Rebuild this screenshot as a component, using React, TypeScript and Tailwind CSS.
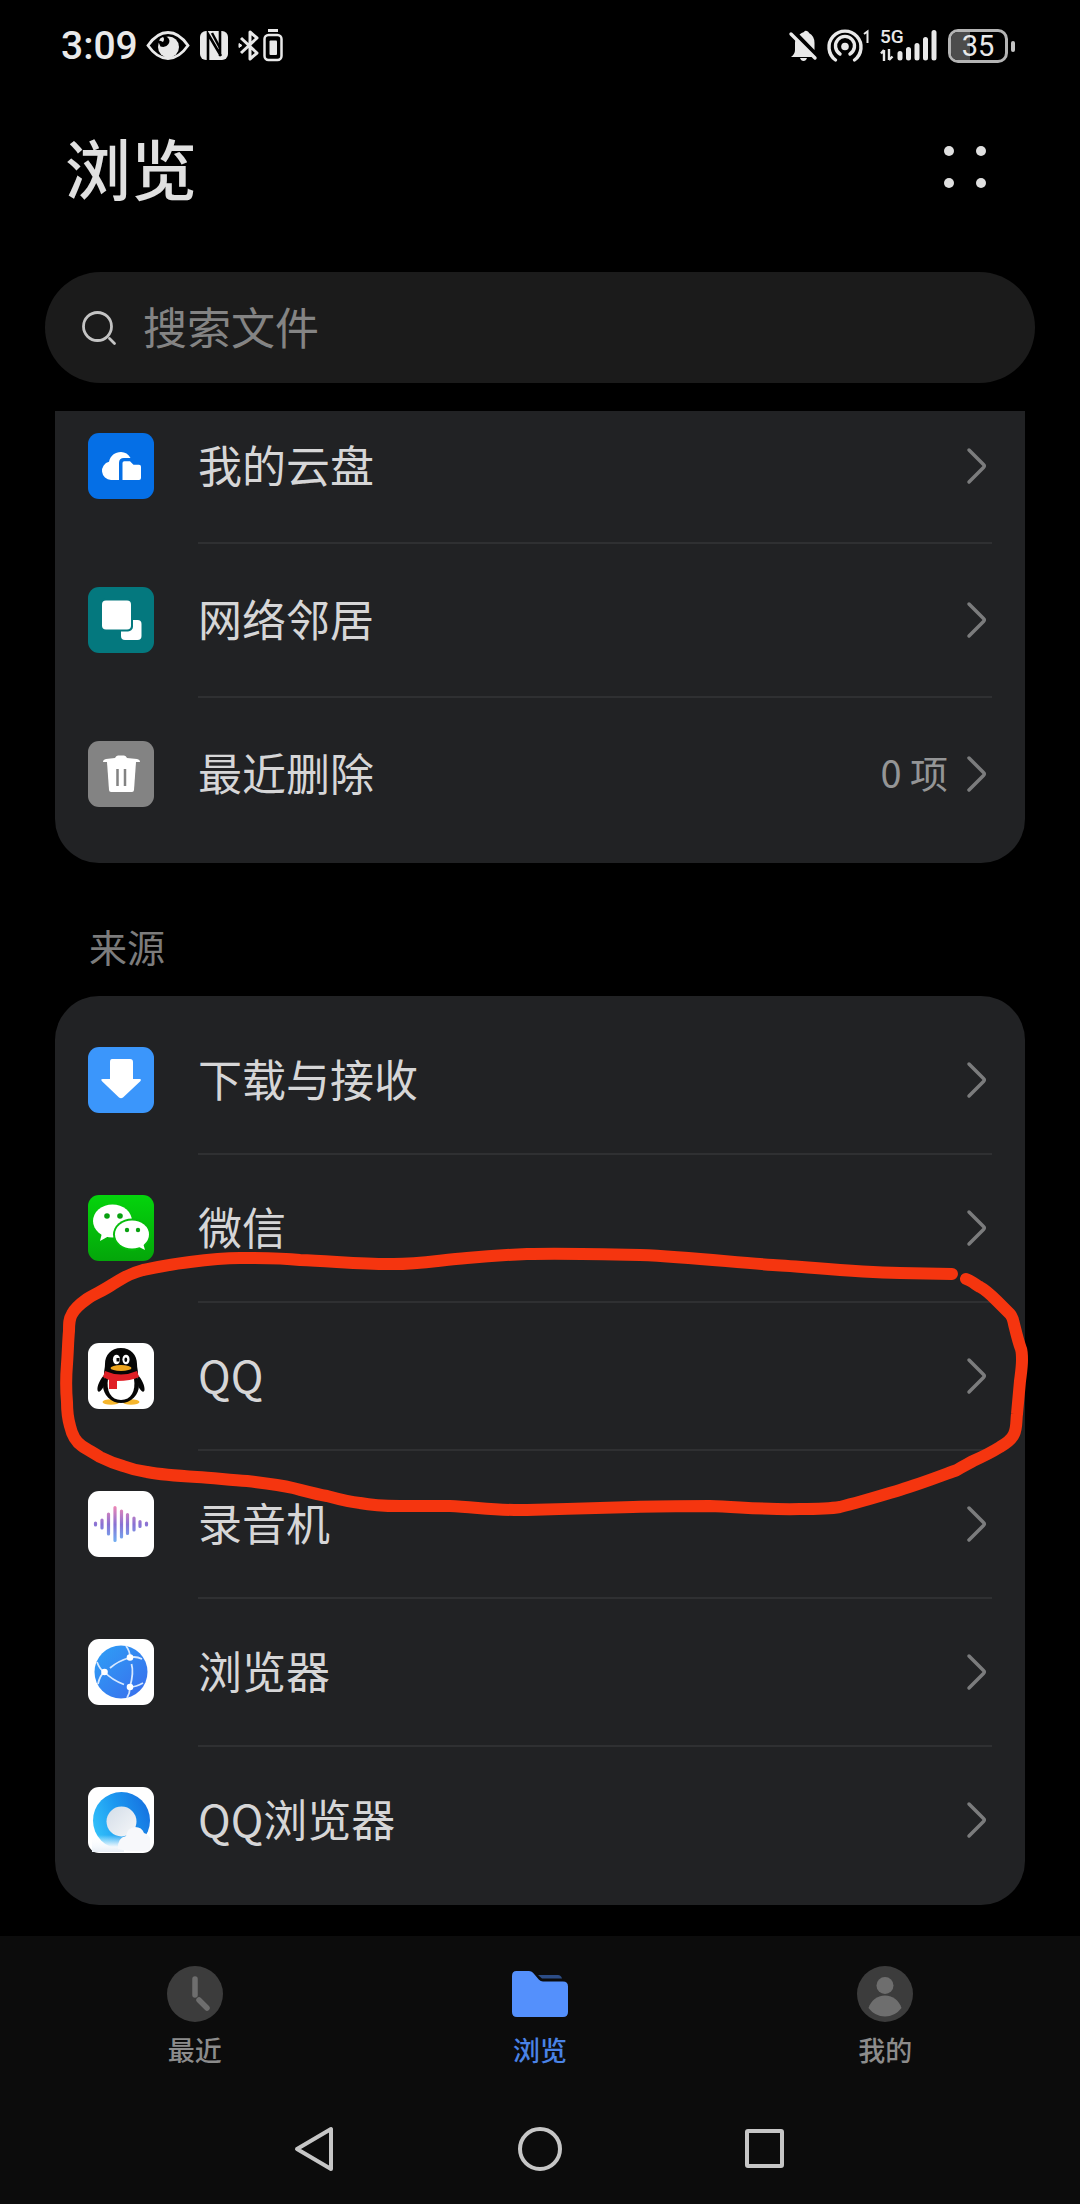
import type { ReactNode } from "react";

type RowData = { label: string; icon: ReactNode; detail?: string };

function Tile({ bg, children }: { bg: string; children: ReactNode }) {
  return (
    <svg viewBox="0 0 66 66" className="mb-0.5 h-[66px] w-[66px] shrink-0" aria-hidden="true">
      <rect width="66" height="66" rx="11" fill={bg} />
      {children}
    </svg>
  );
}

const CloudIcon = (
  <Tile bg="#056fe6">
    <path d="M23 47a9.300 9.300 0 0 1-2-18.300C22.500 22.500 27 19 33 19c4 0 7.500 2 9.500 6H36q-5 0-5 5v17Z" fill="#fff" />
    <path d="M34.500 30q0-1.800 1.800-1.800h5.700l3.500 3.500h5.500q2 0 2 2V45q0 2-2 2H34.500Z" fill="#fff" />
  </Tile>
);

const NetworkIcon = (
  <Tile bg="#04787e">
    <rect x="33" y="33" width="20.500" height="20" rx="4" fill="#fff" />
    <rect x="12" y="11.500" width="33" height="33" rx="5" fill="#04787e" />
    <rect x="14" y="13.500" width="29" height="29" rx="4" fill="#fff" />
  </Tile>
);

const TrashIcon = (
  <Tile bg="#838383">
    <path d="M27 17q1-2.500 3-2.500h6q2 0 3 2.500l10 1q3 .5 3 3H15q0-2.500 3-3Z" fill="#fff" />
    <path d="M19 21h29l-2 28q-.2 2-2 2H23q-1.800 0-2-2Z" fill="#fff" />
    <path d="M29.500 28v17M37 28v17" stroke="#838383" strokeWidth="2.500" />
  </Tile>
);

const DownloadIcon = (
  <Tile bg="#3b96fb">
    <path d="M24 12h18q3 0 3 3v17h6.500q2.500 0 .8 2.200L35 50.500q-2 1.500-4 0L14 34.200q-1.800-2.200.7-2.200H22V15q0-3 2-3Z" fill="#fff" />
  </Tile>
);

const WeChatIcon = (
  <Tile bg="url(#wechat-bg)">
    <defs>
      <linearGradient id="wechat-bg" x1="0" y1="0" x2="0" y2="1">
        <stop offset="0" stopColor="#04d40c" />
        <stop offset="1" stopColor="#04a60a" />
      </linearGradient>
    </defs>
    <ellipse cx="24.500" cy="26" rx="19.500" ry="16.500" fill="#fff" />
    <path d="M14 38l-2 8 9-5Z" fill="#fff" />
    <ellipse cx="44" cy="39.500" rx="19" ry="16" fill="#05bd0b" />
    <ellipse cx="44" cy="39.500" rx="17" ry="14" fill="#fff" />
    <path d="M49 51l8 4-2-7Z" fill="#fff" />
    <g fill="#08a010">
      <circle cx="19" cy="21" r="2.800" />
      <circle cx="32" cy="21" r="2.800" />
      <circle cx="39" cy="35" r="2.200" />
      <circle cx="50" cy="35" r="2.200" />
    </g>
  </Tile>
);

const QQIcon = (
  <Tile bg="#fff">
    <ellipse cx="23" cy="59" rx="8.500" ry="2.800" fill="#f6b62d" />
    <ellipse cx="43" cy="59" rx="8.500" ry="2.800" fill="#f6b62d" />
    <path d="M17 31C12 36 9 43 9.500 47c.5 3 3 2 6-3ZM49 31c5 5 8 12 7.500 16-.5 3-3 2-6-3Z" fill="#060606" />
    <ellipse cx="33" cy="42" rx="18" ry="18" fill="#060606" />
    <path d="M33 5c-10 0-16 7-16 16 0 4-1 6-1 10h34c0-4-1-6-1-10 0-9-6-16-16-16Z" fill="#060606" />
    <path d="M20 36h26c2 12-3 21-13 21S18 48 20 36Z" fill="#fff" />
    <path d="M17 28q16 7 32 0l2 6q-8 4-22 4v8h-8v-9l-6-3Z" fill="#e01f26" />
    <ellipse cx="28.500" cy="16.500" rx="3.600" ry="4.800" fill="#fff" />
    <ellipse cx="38" cy="16.500" rx="3.600" ry="4.800" fill="#fff" />
    <path d="M28.500 15h3v3.500h-3Z" fill="#060606" />
    <ellipse cx="37.800" cy="16.800" rx="1.400" ry="2.200" fill="#060606" />
    <ellipse cx="33" cy="25" rx="10.500" ry="3" fill="#eda41d" />
  </Tile>
);

const RecorderIcon = (
  <Tile bg="#fff">
    <defs>
      <linearGradient id="wave" gradientUnits="userSpaceOnUse" x1="0" y1="15" x2="0" y2="52">
        <stop offset="0" stopColor="#ef86b4" />
        <stop offset="0.500" stopColor="#8872d4" />
        <stop offset="1" stopColor="#6fb2f4" />
      </linearGradient>
    </defs>
    <path
      d="M7.500 32v2M14 29v8M20.500 23v20M27 16.500v33M33.500 20v26M39.500 23.500v19M46 27v12M52 30.500v5M58.500 32v2"
      stroke="url(#wave)"
      strokeWidth="3.200"
      strokeLinecap="round"
    />
  </Tile>
);

const BrowserIcon = (
  <Tile bg="#fff">
    <defs>
      <linearGradient id="globe" x1="0" y1="0" x2="1" y2="1">
        <stop offset="0" stopColor="#2ea0f6" />
        <stop offset="1" stopColor="#3a6cec" />
      </linearGradient>
    </defs>
    <circle cx="33" cy="33" r="26.500" fill="url(#globe)" />
    <g fill="none" stroke="#d6e8ff" strokeWidth="1.800">
      <path d="M22 29Q30 22 42 18.500M16.500 33Q24 41 36 45.500M43.500 25Q46 33 42 48" />
      <path d="M16.500 33Q12 31 9 23M16.500 33Q12 36 10 45M42 18.500Q42 12 38 7M42 18.500Q48 17 54 20M42 48Q42 54 39 59M42 48Q48 48 55 44" />
    </g>
    <g fill="#fff">
      <circle cx="16.500" cy="33" r="3.300" />
      <circle cx="42" cy="18.500" r="3.300" />
      <circle cx="42" cy="48" r="3.300" />
    </g>
  </Tile>
);

const QQBrowserIcon = (
  <Tile bg="#fff">
    <defs>
      <linearGradient id="ring" x1="0" y1="0.700" x2="1" y2="0.300">
        <stop offset="0" stopColor="#33c2fa" />
        <stop offset="0.500" stopColor="#1c98f0" />
        <stop offset="1" stopColor="#1672e0" />
      </linearGradient>
      <linearGradient id="mist" x1="0" y1="0" x2="0" y2="1">
        <stop offset="0" stopColor="#fff" stopOpacity="0" />
        <stop offset="0.700" stopColor="#f4f8fc" />
        <stop offset="1" stopColor="#e8eef5" />
      </linearGradient>
      <linearGradient id="ball" x1="0" y1="0" x2="1" y2="1">
        <stop offset="0" stopColor="#d3dde8" />
        <stop offset="1" stopColor="#f6f7f9" />
      </linearGradient>
    </defs>
    <circle cx="33.500" cy="33.500" r="28.500" fill="url(#ring)" />
    <circle cx="33.500" cy="34.500" r="15" fill="url(#ball)" />
    <path d="M4 48h32v17H4Z" fill="url(#mist)" />
    <path d="M30 62q-1-11 8-13 1-8 9-9 7 0 9 6 4 1 6 5v12q-16 3-32-1Z" fill="#f7f8fb" />
  </Tile>
);

const locations: RowData[] = [
  { label: "我的云盘", icon: CloudIcon },
  { label: "网络邻居", icon: NetworkIcon },
  { label: "最近删除", icon: TrashIcon, detail: "0 项" },
];

const sources: RowData[] = [
  { label: "下载与接收", icon: DownloadIcon },
  { label: "微信", icon: WeChatIcon },
  { label: "QQ", icon: QQIcon },
  { label: "录音机", icon: RecorderIcon },
  { label: "浏览器", icon: BrowserIcon },
  { label: "QQ浏览器", icon: QQBrowserIcon },
];

function Row({ row, last, height }: { row: RowData; last: boolean; height: string }) {
  return (
    <li>
      <button type="button" className={`flex w-full items-center gap-11 pl-[33px] pr-[33px] text-left ${height}`}>
        {row.icon}
        <span
          className={`flex h-full flex-1 items-center justify-between border-b-2 ${last ? "border-transparent" : "border-[#2f3032]"}`}
        >
          <span className="pb-1 text-[44px] leading-[64px] text-[#d6d6d7]">{row.label}</span>
          <span className="flex items-center gap-[18px] pr-1">
            {row.detail && <span className="pb-1 text-[38px] leading-[54px] text-[#949596]">{row.detail}</span>}
            <svg viewBox="0 0 22 38" className="h-[38px] w-[22px]" fill="none" aria-hidden="true">
              <path d="M3 3l14.500 14.500q1.500 1.500 0 3L3 35" stroke="#7b7c7d" strokeWidth="3.500" strokeLinecap="round" />
            </svg>
          </span>
        </span>
      </button>
    </li>
  );
}

function StatusBar() {
  return (
    <div className="flex h-[92px] items-center justify-between pl-[61px] pr-[65px] text-[#e9e9e9]">
      <div className="flex items-center">
        <span className="mr-2 font-['Roboto',sans-serif] text-[39px] font-medium leading-none">3:09</span>
        <svg viewBox="0 0 138 36" className="h-9 w-[138px]" aria-hidden="true">
          <path d="M2 17.500Q11 4.500 22 4.500T42 17.500Q33 30.500 22 30.500T2 17.500Z" fill="none" stroke="currentColor" strokeWidth="2.800" />
          <circle cx="22.500" cy="19" r="10.500" fill="currentColor" />
          <path d="M12 13a8 8 0 0 1 9-4q4 3 1.500 7t-8 2.500Z" fill="#000" />
          <path d="M13 12.500q2 0 4 1.500 2-3 0-5-3 .5-4 3.500Z" fill="currentColor" />
          <rect x="54" y="3" width="28" height="29" rx="6" fill="currentColor" />
          <path d="M62 32V6l13 22M74 3v25" fill="none" stroke="#000" strokeWidth="2.600" />
          <path d="M66 5l8 15" stroke="#000" strokeWidth="2.500" />
          <path d="M95 10l16 15-7 6V4l7 6-16 15" fill="none" stroke="currentColor" strokeWidth="3" strokeLinejoin="round" />
          <path d="M93 15.500l3 2-3 2Z" fill="currentColor" stroke="currentColor" />
          <path d="M122 2.500h10" stroke="currentColor" strokeWidth="3" />
          <rect x="118.500" y="7" width="17" height="25" rx="4" fill="none" stroke="currentColor" strokeWidth="2.500" />
          <rect x="123.500" y="12.500" width="7.500" height="14.500" rx="1" fill="currentColor" />
        </svg>
      </div>
      <div className="flex items-center">
        <svg viewBox="0 0 90 36" className="mr-[2px] h-9 w-[90px]" aria-hidden="true">
          <path d="M3 29q4-3 4-7v-7q0-2 .6-3.500L25 29ZM11.500 6.500q2-2 4.500-2.500 1-2 3-1t2 2Q26.500 8 26.500 15v7Z" fill="currentColor" />
          <path d="M12 30h7q-1 3-3.500 3T12 30Z" fill="currentColor" />
          <path d="M3 6l24 24" stroke="currentColor" strokeWidth="3.400" strokeLinecap="round" />
          <g fill="none" stroke="currentColor" strokeWidth="3.400" strokeLinecap="round">
            <path d="M47.500 32a16 16 0 1 1 19 0" />
            <path d="M52 26a9.500 9.500 0 1 1 10 0" />
          </g>
          <circle cx="57" cy="18.500" r="3.800" fill="currentColor" />
          <path d="M76 6l3.500-2.500V15" fill="none" stroke="currentColor" strokeWidth="2" />
        </svg>
        <div className="mr-[11px] flex h-9 items-end pb-[3px]">
          <div className="flex w-[17px] flex-col gap-1">
            <span className="font-['Roboto',sans-serif] text-[19px] font-medium leading-[16px]">5G</span>
            <svg viewBox="0 0 14 12" className="h-3 w-[14px]" aria-hidden="true">
              <path d="M4 12V1M1 4.500L4 1M9 0v11M12.500 7.500L9 11" fill="none" stroke="currentColor" strokeWidth="2.400" />
            </svg>
          </div>
          <svg viewBox="0 0 40 32" className="h-8 w-10" aria-hidden="true">
            <path d="M3 24.500V29M11.500 20.500V29M20 16.500V29M28.500 10.500V29M37 3.500V29" stroke="currentColor" strokeWidth="5" strokeLinecap="round" />
          </svg>
        </div>
        <div className="relative flex h-[34px] w-[60px] items-center justify-center overflow-hidden rounded-[10px] border-3 border-[#b4b4b4]">
          <span className="absolute inset-y-0 left-0 w-[19px] bg-[#4c4c4c]" />
          <span className="relative font-['Roboto',sans-serif] text-[29px] leading-none">35</span>
        </div>
        <span className="ml-[3px] h-[11px] w-[4px] rounded-sm bg-[#c4c4c4]" />
      </div>
    </div>
  );
}

export default function App() {
  return (
    <div className="flex min-h-screen flex-col bg-black font-['Noto_Sans_CJK_SC',sans-serif]">
      <StatusBar />

      <header className="flex h-[152px] items-center justify-between pl-[65px] pr-[94px]">
        <h1 className="pb-1 text-[66px] font-medium leading-[96px] text-[#e0e0e0]">浏览</h1>
        <button type="button" aria-label="更多" className="mb-0.5 grid grid-cols-2 gap-[22px]">
          <span className="size-[10px] rounded-full bg-[#e0e0e0]" />
          <span className="size-[10px] rounded-full bg-[#e0e0e0]" />
          <span className="size-[10px] rounded-full bg-[#e0e0e0]" />
          <span className="size-[10px] rounded-full bg-[#e0e0e0]" />
        </button>
      </header>

      <label className="mx-[45px] mt-7 flex h-[111px] items-center gap-[26px] rounded-full bg-[#1b1b1b] px-9">
        <svg viewBox="0 0 36 36" className="size-9 shrink-0" fill="none" stroke="#c4c4c4" strokeWidth="2.800" strokeLinecap="round" aria-hidden="true">
          <circle cx="16.500" cy="16.500" r="14" />
          <path d="M28.500 28.500l5 5" />
        </svg>
        <input
          type="search"
          aria-label="搜索文件"
          placeholder="搜索文件"
          className="min-w-0 flex-1 bg-transparent pb-1 text-[44px] leading-[64px] text-[#d6d6d7] outline-none placeholder:text-[#848484]"
        />
      </label>

      <main className="mx-[55px] mt-7 flex-1">
        <div className="overflow-hidden">
          <ul className="-mt-[21px] rounded-b-[44px] bg-[#212224] pb-[11px]">
            {locations.map((row, i) => (
              <Row key={row.label} row={row} last={i === locations.length - 1} height="h-[154px]" />
            ))}
          </ul>
        </div>

        <h2 className="mb-[22px] mt-[55px] pl-[34px] text-[38px] leading-[56px] text-[#7c7c7c]">来源</h2>

        <div className="relative">
          <ul className="rounded-[44px] bg-[#212224] pb-[10px] pt-[11px]">
            {sources.map((row, i) => (
              <Row key={row.label} row={row} last={i === sources.length - 1} height="h-[148px]" />
            ))}
          </ul>
          {/* Hand-drawn marker loop around the QQ row */}
          <svg
            viewBox="55 1240 970 280"
            preserveAspectRatio="none"
            className="pointer-events-none absolute inset-x-0 top-[245px] h-[280px] w-full overflow-visible"
            fill="none"
            stroke="#f5350f"
            strokeWidth="12"
            strokeLinecap="round"
            strokeLinejoin="round"
            aria-hidden="true"
          >
            <path d="M952 1273L900 1272C850 1271 810 1266 773 1264C730 1261 690 1256 640 1254C600 1253 560 1252 527 1253C503 1254 488 1255 467 1257C440 1259 415 1264 388 1263C360 1263 330 1260 300 1259C280 1257 260 1257 240 1257C222 1257 205 1259 190 1261C172 1263 158 1266 143 1269C127 1273 122 1278 113 1283C103 1290 94 1293 87 1298C80 1303 75 1307 72 1313C69 1318 69 1322 69 1330C68 1340 68 1350 67 1363C66 1375 66 1390 67 1401C67 1410 68 1418 70 1425C72 1434 76 1441 82 1445C88 1449 94 1452 100 1456C108 1460 116 1463 123 1465C131 1468 139 1470 147 1471C163 1474 180 1475 197 1476C214 1477 230 1479 247 1480C264 1482 280 1484 293 1487C305 1490 316 1493 327 1495C338 1498 349 1501 360 1502C375 1505 390 1505 400 1505C417 1505 433 1505 450 1505C475 1506 500 1510 527 1509C562 1508 600 1507 633 1506C660 1505 685 1505 710 1505C740 1506 770 1509 800 1508C815 1508 828 1508 840 1506C861 1501 880 1495 900 1489C920 1483 938 1476 957 1469C963 1465 968 1463 973 1460C982 1456 992 1451 1000 1446C1007 1442 1012 1438 1014 1433C1017 1427 1016 1420 1017 1413C1018 1402 1019 1391 1020 1380C1021 1372 1022 1366 1022 1359C1022 1355 1022 1351 1021 1348C1018 1340 1016 1331 1014 1323C1013 1318 1012 1315 1010 1313C1005 1308 1001 1304 997 1300C991 1294 986 1289 980 1286C975 1283 970 1279 966 1278" />
          </svg>
        </div>
      </main>

      <footer className="mt-[31px] bg-[#0c0c0c]">
        <nav className="grid grid-cols-3 px-[22px] pt-[30px] text-[27px] font-medium leading-10 text-[#8c8c8c]">
          <button type="button" className="flex flex-col items-center gap-2">
            <svg viewBox="0 0 56 56" className="size-14" aria-hidden="true">
              <circle cx="28" cy="28" r="28" fill="#3c3c3c" />
              <path d="M28 13v16M32 34l8 8" stroke="#6e6e6e" strokeWidth="5.500" strokeLinecap="round" />
            </svg>
            <span>最近</span>
          </button>
          <button type="button" aria-current="page" className="flex flex-col items-center gap-2 text-[#4a83e6]">
            <svg viewBox="0 0 56 56" className="size-14" aria-hidden="true">
              <path d="M26 9h20q3 0 4 3.500H30Z" fill="#2d4d86" />
              <path d="M4.500 5H17q2.500 0 4 1.800l6 7q1.500 1.700 4 1.700h20q5 0 5 5V46q0 5-5 5H5q-5 0-5-5V10q0-5 4.500-5Z" fill="#5490fc" />
            </svg>
            <span>浏览</span>
          </button>
          <button type="button" className="flex flex-col items-center gap-2">
            <svg viewBox="0 0 56 56" className="size-14" aria-hidden="true">
              <circle cx="28" cy="28" r="28" fill="#3c3c3c" />
              <circle cx="28" cy="19.500" r="8.500" fill="#6e6e6e" />
              <path d="M28 29.500c8 0 14 5 16.500 12.500Q38 50.500 28 50.500T11.500 42C14 34.500 20 29.500 28 29.500Z" fill="#6e6e6e" />
            </svg>
            <span>我的</span>
          </button>
        </nav>
        <div className="mt-[56px] grid grid-cols-3 px-[203px] pb-[33px]">
          <button type="button" aria-label="返回" className="flex justify-center">
            <svg viewBox="0 0 46 46" className="size-[46px]" fill="none" stroke="#c6c6c6" strokeWidth="4" strokeLinejoin="round" aria-hidden="true">
              <path d="M39 3v40L5 23Z" />
            </svg>
          </button>
          <button type="button" aria-label="主页" className="flex justify-center">
            <svg viewBox="0 0 46 46" className="size-[46px]" fill="none" stroke="#c6c6c6" strokeWidth="4" aria-hidden="true">
              <circle cx="23" cy="23" r="20" />
            </svg>
          </button>
          <button type="button" aria-label="多任务" className="flex justify-center">
            <svg viewBox="0 0 46 46" className="size-[46px]" fill="none" stroke="#c6c6c6" strokeWidth="4" strokeLinejoin="round" aria-hidden="true">
              <rect x="5" y="5" width="35" height="35" rx="1" />
            </svg>
          </button>
        </div>
      </footer>
    </div>
  );
}
